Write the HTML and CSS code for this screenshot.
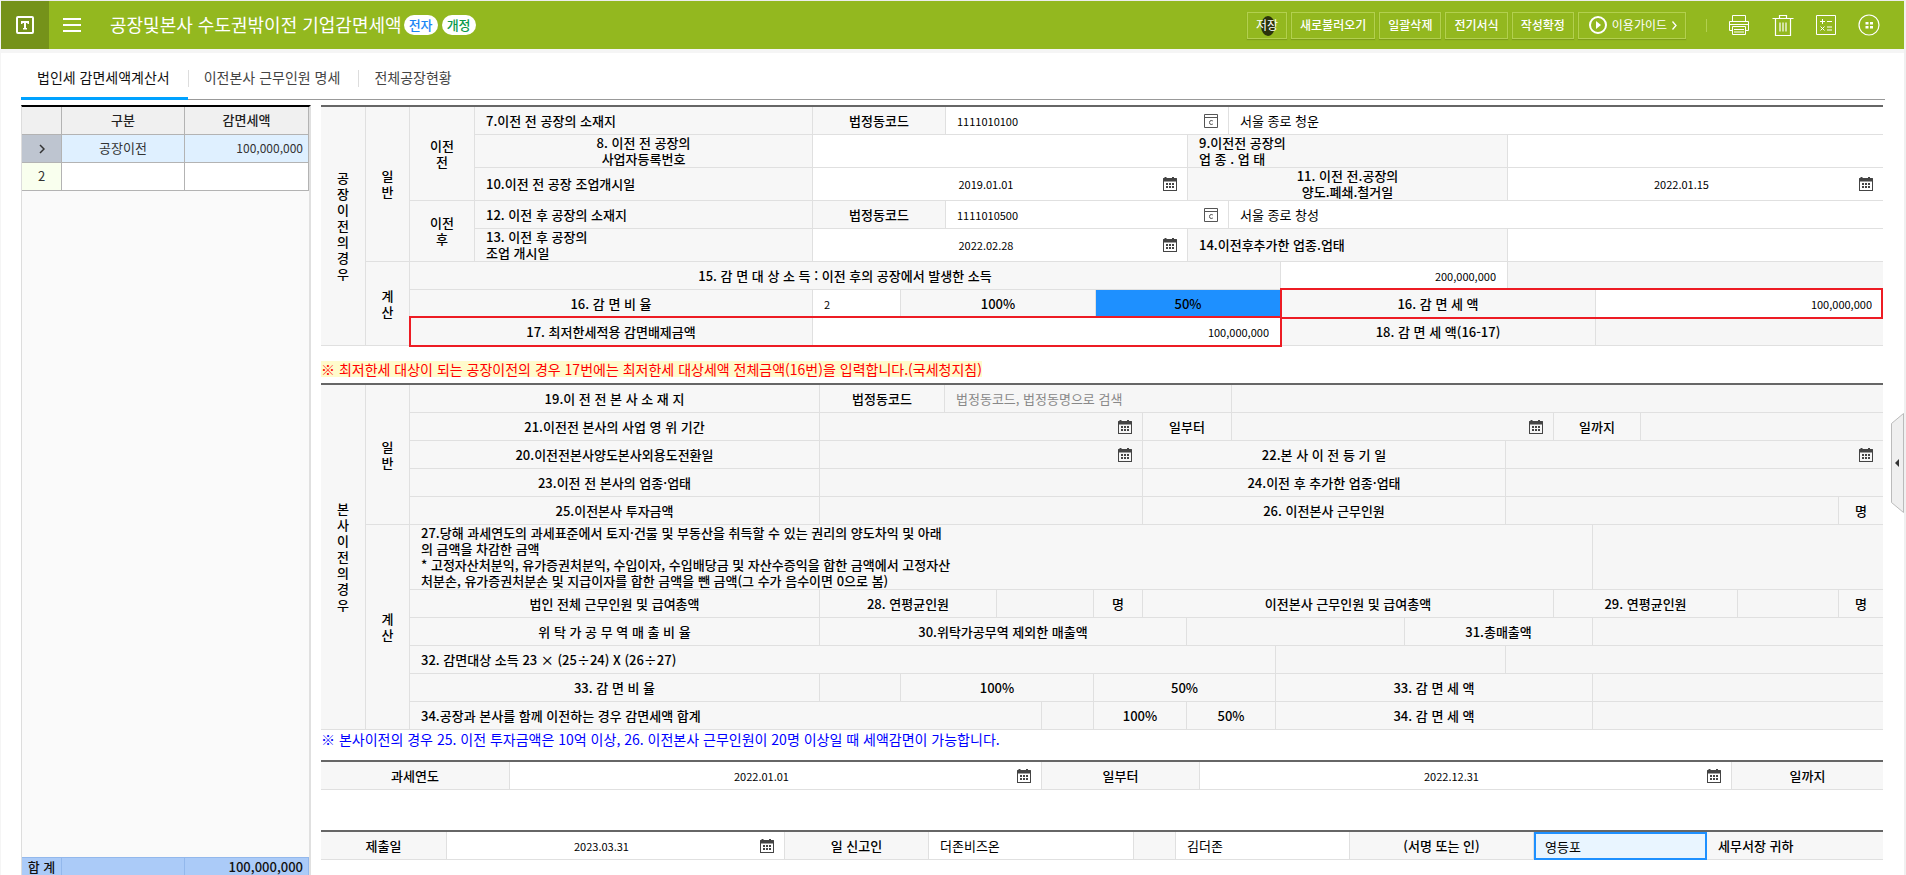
FILE: index.html
```html
<!DOCTYPE html>
<html lang="ko">
<head>
<meta charset="utf-8">
<title>공장및본사 수도권밖이전 기업감면세액</title>
<link rel="stylesheet" href="styles.css">
</head>
<body>
<svg class="defs" aria-hidden="true">
  <symbol id="cal" viewBox="0 0 14 14">
    <path d="M1.5 0h2v1h5.500v-1h2v1h2.500q.5 0 .5.500v12q0 .5-.5.500h-13q-.5 0-.5-.5v-12q0-.5.5-.5h1zM1 4.500v8.500h12v-8.500z" fill="#444" fill-rule="evenodd"/>
    <path d="M3 6h2v2h-2zM6 6h2v2h-2zM9 6h2v2h-2zM3 9h2v2h-2zM6 9h2v2h-2zM9 9h2v2h-2z" fill="#444"/>
  </symbol>
  <symbol id="code" viewBox="0 0 14 14">
    <path d="M.5.5h13v13h-13zM0 3.5h14" fill="none" stroke="#555"/>
    <path d="M9 7.2Q8.500 6.500 7.200 6.500Q5.500 6.500 5.500 8.500Q5.500 10.500 7.200 10.500Q8.500 10.500 9 9.700" fill="none" stroke="#555"/>
  </symbol>
</svg>
<header class="topbar">
  <button class="logo" aria-label="홈"><svg width="18" height="18" viewBox="0 0 18 18"><rect x="1" y="1" width="16" height="16" rx="1" fill="none" stroke="#fff" stroke-width="2"/><path d="M5 5h8v3h-1.500v-1h-1.500v5h1v1.500h-4v-1.500h1v-5h-1.500v1h-1.500z" fill="#fff"/></svg></button>
  <button class="menu" aria-label="메뉴"><svg width="18" height="14" viewBox="0 0 18 14"><path d="M0 1h18M0 7h18M0 13h18" stroke="#fff" stroke-width="2"/></svg></button>
  <h1>공장및본사 수도권밖이전 기업감면세액</h1>
  <span class="pill pill-blue">전자</span>
  <span class="pill pill-green">개정</span>
  <nav class="actions">
    <button class="act save"><span>저장</span></button>
    <button class="act">새로불러오기</button>
    <button class="act">일괄삭제</button>
    <button class="act">전기서식</button>
    <button class="act">작성확정</button>
    <button class="act guide"><svg width="18" height="18" viewBox="0 0 18 18"><circle cx="9" cy="9" r="8" fill="none" stroke="#fff" stroke-width="2"/><path d="M7 5l5 4-5 4z" fill="#fff"/></svg>이용가이드<svg width="5" height="9" viewBox="0 0 5 9"><path d="M.5.500l3.500 4-3.500 4" fill="none" stroke="#fff" stroke-width="1.300"/></svg></button>
  </nav>
  <div class="tools">
    <button aria-label="인쇄"><svg width="22" height="21" viewBox="0 0 22 21"><path d="M4.500 6.500v-6h13v6M4.500 15.500h-3v-9h19v9h-3M4.500 11.500h13v8h-13zM6 14.500h10M6 17h10M2 9.500h18" fill="none" stroke="#fff"/></svg></button>
    <button aria-label="삭제"><svg width="22" height="21" viewBox="0 0 22 21"><path d="M.5 3.500h21M7.500 3.500v-3h7v3M3.500 3.500v17h15v-17M8 7.500v9M11 7.500v9M14 7.500v9" fill="none" stroke="#fff" stroke-width="1.200"/></svg></button>
    <button aria-label="계산기"><svg width="20" height="20" viewBox="0 0 20 20"><path d="M.5.500h19v19h-19zM4 6.500h5M6.500 4v5M11 6.500h5M4.500 11.500l4 4M8.500 11.500l-4 4M11 12h5M11 15h5" fill="none" stroke="#fff"/></svg></button>
    <button aria-label="더보기"><svg width="22" height="22" viewBox="0 0 22 22"><circle cx="11" cy="11" r="10" fill="none" stroke="#fff" stroke-width="1.200"/><path d="M7.500 8h3v2.500h-3zM12 8h3v2.500h-3zM7.500 12h3v2.500h-3zM12 12h3v2.500h-3z" fill="#fff"/></svg></button>
  </div>
</header>
<nav class="tabs">
  <a href="#calc" class="tab on">법인세 감면세액계산서</a>
  <a href="#staff" class="tab">이전본사 근무인원 명세</a>
  <a href="#plants" class="tab">전체공장현황</a>
</nav>
<main>
  <aside class="list">
    <table class="grid">
      <colgroup><col class="n"><col class="k"><col></colgroup>
      <thead><tr><th></th><th>구분</th><th>감면세액</th></tr></thead>
      <tbody>
        <tr class="sel"><td class="cur"><svg width="6" height="10" viewBox="0 0 6 10"><path d="M1 1l4 4-4 4" fill="none" stroke="#333" stroke-width="1.500"/></svg></td><td>공장이전</td><td class="amt">100,000,000</td></tr>
        <tr><td class="idx">2</td><td></td><td></td></tr>
      </tbody>
    </table>
    <table class="grid total">
      <colgroup><col class="n"><col class="k"><col></colgroup>
      <tbody><tr><th>합 계</th><td></td><td class="amt">100,000,000</td></tr></tbody>
    </table>
  </aside>
  <section class="form" id="calc">
    <table class="sheet plant">
      <colgroup><col class="w45"><col class="w44"><col class="w65"><col class="w338"><col class="w88"><col class="w45"><col class="w150"><col class="w92"><col class="w41"><col class="w52"><col class="w227"><col class="w88"><col class="w287"></colgroup>
      <tbody>
      <tr><th rowspan="8">공<br>장<br>이<br>전<br>의<br>경<br>우</th><th rowspan="5">일<br>반</th><th rowspan="3">이전<br>전</th><th class="l">7.이전 전 공장의 소재지</th><th colspan="2">법정동코드</th><td colspan="3"><div class="f"><input class="num" aria-label="이전 전 법정동코드" value="1111010100"><button class="ic" aria-label="코드 검색"><svg><use href="#code"/></svg></button></div></td><td colspan="4" class="e"><input aria-label="이전 전 공장의 소재지" value="서울 종로 청운"></td></tr>
      <tr><th>8. 이전 전 공장의<br>사업자등록번호</th><td colspan="4"><input aria-label="사업자등록번호"></td><th colspan="3" class="l">9.이전전 공장의<br>업 종 . 업 태</th><td colspan="2" class="e"><input aria-label="이전전 업종 업태"></td></tr>
      <tr><th class="l">10.이전 전 공장 조업개시일</th><td colspan="4"><div class="f"><input class="num c" aria-label="조업개시일" value="2019.01.01"><button class="ic" aria-label="달력"><svg><use href="#cal"/></svg></button></div></td><th colspan="3">11. 이전 전.공장의<br>양도.폐쇄.철거일</th><td colspan="2" class="e"><div class="f"><input class="num c" aria-label="양도 폐쇄 철거일" value="2022.01.15"><button class="ic" aria-label="달력"><svg><use href="#cal"/></svg></button></div></td></tr>
      <tr><th rowspan="2">이전<br>후</th><th class="l">12. 이전 후 공장의 소재지</th><th colspan="2">법정동코드</th><td colspan="3"><div class="f"><input class="num" aria-label="이전 후 법정동코드" value="1111010500"><button class="ic" aria-label="코드 검색"><svg><use href="#code"/></svg></button></div></td><td colspan="4" class="e"><input aria-label="이전 후 공장의 소재지" value="서울 종로 창성"></td></tr>
      <tr><th class="l">13. 이전 후 공장의<br>조업 개시일</th><td colspan="4"><div class="f"><input class="num c" aria-label="이전 후 조업개시일" value="2022.02.28"><button class="ic" aria-label="달력"><svg><use href="#cal"/></svg></button></div></td><th colspan="3" class="l">14.이전후추가한 업종.업태</th><td colspan="2" class="e"><input aria-label="추가한 업종 업태"></td></tr>
      <tr><th rowspan="3">계<br>산</th><th colspan="8">15. 감 면 대 상 소 득 : 이전 후의 공장에서 발생한 소득</th><td><input class="num r" aria-label="감면대상소득" value="200,000,000"></td><td colspan="2" class="g e"></td></tr>
      <tr><th colspan="2">16. 감 면 비 율</th><td><input class="num" aria-label="감면비율" value="2"></td><th colspan="2"><button class="pct">100%</button></th><th colspan="3" class="picked"><button class="pct">50%</button></th><th colspan="2" class="mark mark-l">16. 감 면 세 액</th><td class="e mark mark-r"><input class="num r" aria-label="감면세액" value="100,000,000"></td></tr>
      <tr><th colspan="2" class="mark mark-l">17. 최저한세적용 감면배제금액</th><td colspan="6" class="mark mark-r"><input class="num r" aria-label="감면배제금액" value="100,000,000"></td><th colspan="2">18. 감 면 세 액(16-17)</th><td class="g e"></td></tr>
      </tbody>
    </table>
    <p class="note warn"><mark>※ 최저한세 대상이 되는 공장이전의 경우 17번에는 최저한세 대상세액 전체금액(16번)을 입력합니다.(국세청지침)</mark></p>
    <table class="sheet hq">
      <colgroup><col class="w45"><col class="w44"><col class="w410"><col class="w81"><col class="w44"><col class="w52"><col class="w45"><col class="w52"><col class="w49"><col class="w44"><col class="w45"><col class="w44"><col class="w129"><col class="w101"><col class="w48"><col class="w39"><col class="w48"><col class="w97"><col class="w101"><col class="w44"></colgroup>
      <tbody>
      <tr><th rowspan="11">본<br>사<br>이<br>전<br>의<br>경<br>우</th><th rowspan="5">일<br>반</th><th>19.이 전 전 본 사 소 재 지</th><th colspan="2">법정동코드</th><td colspan="6"><input aria-label="본사 법정동코드" placeholder="법정동코드, 법정동명으로 검색"></td><td colspan="9" class="e"></td></tr>
      <tr><th>21.이전전 본사의 사업 영 위 기간</th><td colspan="6"><div class="f"><input class="num c" aria-label="영위기간 시작"><button class="ic" aria-label="달력"><svg><use href="#cal"/></svg></button></div></td><th colspan="2">일부터</th><td colspan="4"><div class="f"><input class="num c" aria-label="영위기간 끝"><button class="ic" aria-label="달력"><svg><use href="#cal"/></svg></button></div></td><th colspan="2">일까지</th><td colspan="3" class="e"></td></tr>
      <tr><th>20.이전전본사양도본사외용도전환일</th><td colspan="6"><div class="f"><input class="num c" aria-label="용도전환일"><button class="ic" aria-label="달력"><svg><use href="#cal"/></svg></button></div></td><th colspan="5">22.본 사 이 전 등 기 일</th><td colspan="6" class="e"><div class="f"><input class="num c" aria-label="이전등기일"><button class="ic" aria-label="달력"><svg><use href="#cal"/></svg></button></div></td></tr>
      <tr><th>23.이전 전 본사의 업종·업태</th><td colspan="6"><input aria-label="이전 전 업종 업태"></td><th colspan="5">24.이전 후 추가한 업종·업태</th><td colspan="6" class="e"><input aria-label="이전 후 업종 업태"></td></tr>
      <tr><th>25.이전본사 투자금액</th><td colspan="6"><input class="num r" aria-label="투자금액"></td><th colspan="5">26. 이전본사 근무인원</th><td colspan="5"><input class="num r" aria-label="근무인원"></td><th class="e">명</th></tr>
      <tr><th rowspan="6">계<br>산</th><th colspan="14" class="l">27.당해 과세연도의 과세표준에서 토지·건물 및 부동산을 취득할 수 있는 권리의 양도차익 및 아래<br>의 금액을 차감한 금액<br>* 고정자산처분익, 유가증권처분익, 수입이자, 수입배당금 및 자산수증익을 합한 금액에서 고정자산<br>처분손, 유가증권처분손 및 지급이자를 합한 금액을 뺀 금액(그 수가 음수이면 0으로 봄)</th><td colspan="4" class="e"></td></tr>
      <tr><th>법인 전체 근무인원 및 급여총액</th><th colspan="3">28. 연평균인원</th><td colspan="2"><input class="num r" aria-label="28 연평균인원"></td><th>명</th><th colspan="6">이전본사 근무인원 및 급여총액</th><th colspan="3">29. 연평균인원</th><td><input class="num r" aria-label="29 연평균인원"></td><th class="e">명</th></tr>
      <tr><th>위 탁 가 공 무 역 매 출 비 율</th><th colspan="7">30.위탁가공무역 제외한 매출액</th><td colspan="3"><input class="num r" aria-label="매출액"></td><th colspan="3">31.총매출액</th><td colspan="4" class="e"><input class="num r" aria-label="총매출액"></td></tr>
      <tr><th colspan="10" class="l">32. 감면대상 소득 23 × (25÷24) X (26÷27)</th><td colspan="2"></td><td colspan="6" class="e"></td></tr>
      <tr><th>33. 감 면 비 율</th><td></td><th colspan="4"><button class="pct">100%</button></th><th colspan="4"><button class="pct">50%</button></th><th colspan="4">33. 감 면 세 액</th><td colspan="4" class="e"></td></tr>
      <tr><th colspan="5" class="l">34.공장과 본사를 함께 이전하는 경우 감면세액 합계</th><td></td><th colspan="2"><button class="pct">100%</button></th><th colspan="2"><button class="pct">50%</button></th><th colspan="4">34. 감 면 세 액</th><td colspan="4" class="e"></td></tr>
      </tbody>
    </table>
    <p class="note info">※ 본사이전의 경우 25. 이전 투자금액은 10억 이상, 26. 이전본사 근무인원이 20명 이상일 때 세액감면이 가능합니다.</p>
    <table class="sheet year">
      <colgroup><col class="w189"><col class="w532"><col class="w158"><col class="w532"><col class="w151"></colgroup>
      <tbody><tr><th>과세연도</th><td><div class="f"><input class="num c" aria-label="과세연도 시작" value="2022.01.01"><button class="ic" aria-label="달력"><svg><use href="#cal"/></svg></button></div></td><th>일부터</th><td><div class="f"><input class="num c" aria-label="과세연도 끝" value="2022.12.31"><button class="ic" aria-label="달력"><svg><use href="#cal"/></svg></button></div></td><th class="e">일까지</th></tr></tbody>
    </table>
    <table class="sheet sign">
      <colgroup><col class="w126"><col class="w338"><col class="w144"><col class="w205"><col class="w42"><col class="w174"><col class="w184"><col class="w173"><col class="w176"></colgroup>
      <tbody><tr><th>제출일</th><td><div class="f"><input class="num c" aria-label="제출일" value="2023.03.31"><button class="ic" aria-label="달력"><svg><use href="#cal"/></svg></button></div></td><th>일 신고인</th><td><input aria-label="신고인 상호" value="더존비즈온"></td><th></th><td><input aria-label="신고인 성명" value="김더존"></td><th>(서명 또는 인)</th><td class="focus"><input aria-label="세무서" value="영등포"></td><th class="l e">세무서장 귀하</th></tr></tbody>
    </table>
  </section>
</main>
<button class="drawer" aria-label="패널 열기"><svg width="13" height="100" viewBox="0 0 13 100"><path d="M12.500.500L.5 10.500v79L12.500 99.500z" fill="#efefef" stroke="#bbb"/><path d="M8 46v8l-4-4z" fill="#333"/></svg></button>
</body>
</html>
```
FILE: styles.css
```css
* { box-sizing: border-box; }
body {
  margin: 0;
  height: 100vh;
  display: flex;
  flex-direction: column;
  overflow: hidden;
  position: relative;
  border-top: 1px solid #ececec;
  border-left: 1px solid #f5f5f5;
  border-right: 2px solid #f0f0f0;
  background: #fff;
  color: #000;
  font: 13px/16px "Noto Sans CJK KR", sans-serif;
}
.defs { position: absolute; width: 0; height: 0; }
button, input { font: inherit; color: inherit; border: 0; background: none; padding: 0; margin: 0; }
input { outline: 0; min-width: 0; }
button { cursor: pointer; }

.topbar {
  display: flex;
  align-items: center;
  flex: none;
  height: 52px;
  background: #93b81f;
  border-bottom: 4px solid #f5f5f5;
  color: #fff;
}
.logo { width: 48px; height: 48px; background: #75921a; display: flex; align-items: center; justify-content: center; }
.menu { width: 46px; height: 48px; display: flex; align-items: center; justify-content: center; }
.topbar h1 { margin: 0 2px 0 15px; padding-bottom: 2px; font-size: 18px; line-height: 24px; font-weight: 400; }
.pill { width: 34px; height: 20px; margin-right: 4px; border-radius: 10px; background: #fff; text-align: center; line-height: 20px; font-weight: 500; }
.pill-blue { color: #1b86f5; }
.pill-green { color: #0a9a4c; }
.actions { display: flex; gap: 4px; margin-left: auto; }
.act { height: 27px; padding: 0 8px; border: 1px solid #b3d04f; box-shadow: 0 1px 1px #7f9f1a; font-size: 12px; line-height: 24px; color: #fff; font-weight: 500; position: relative; }
.save::before { content: ""; position: absolute; left: 13px; top: 3px; width: 14px; height: 20px; border-radius: 50%; background: #2b330c; }
.save span { position: relative; font-weight: 400; }
.guide { display: flex; align-items: center; padding: 0 8px 0 10px; gap: 5px; font-weight: 400; }
.tools { display: flex; align-items: center; gap: 22px; margin-left: 20px; padding: 0 24px 0 22px; position: relative; }
.tools::before { content: ""; width: 1px; height: 13px; background: #b3d04f; position: absolute; left: 0; }
.tools button { height: 22px; display: flex; align-items: center; }

.tabs { display: flex; flex: none; height: 47px; margin: 0 19px 5px 20px; position: relative; box-shadow: inset 0 -1px #999; }
.tab { position: relative; padding: 0 18px 0 16px; font-size: 14px; line-height: 48px; color: #444; text-decoration: none; }
.tab + .tab::before { content: ""; position: absolute; left: 0; top: 17px; width: 1px; height: 17px; background: #ddd; }
.tab.on { color: #111; border-bottom: 3px solid #00a2ff; }

main { flex: 1; min-height: 0; display: flex; gap: 10px; padding: 0 21px 0 20px; }
.list { flex: 0 0 290px; display: flex; flex-direction: column; justify-content: space-between; background: #fafafa; border-top: 2px solid #000; border-left: 1px solid #ddd; border-right: 2px solid #e0e0e0; }
.grid { width: 100%; table-layout: fixed; border-collapse: separate; border-spacing: 0; }
.grid .n { width: 40px; }
.grid .k { width: 123px; }
.grid th, .grid td { height: 28px; padding: 0 5px 2px; border: solid #b3b3b3; border-width: 0 1px 1px 0; text-align: center; font-weight: 400; background: #fff; color: #333; }
.grid thead th { background: #f0f0f0; font-weight: 500; color: #222; }
.grid .amt { text-align: right; font-size: 12px; }
.grid .sel td { background: #dff0ff; }
.grid .sel .cur { background: #bec5d0; padding-bottom: 0; }
.grid .idx { background: #f9ffee; }
.grid.total th, .grid.total td { height: 18px; padding-bottom: 0; border-color: #93b8ec; border-width: 1px 1px 0 0; background: #abcbf8; color: #111; font-weight: 500; }
.grid.total .amt { font-size: 13px; }

.form { flex: 1; min-width: 0; }
.sheet { width: 100%; table-layout: fixed; border-collapse: separate; border-spacing: 0; border-top: 2px solid #666; }
.sheet th, .sheet td { height: 28px; padding: 0; border: solid #e0e0e0; border-width: 0 1px 1px 0; background: #fff; }
.sheet tr:nth-child(n) .e { border-right: 0; }
.sheet th { background: #f7f7f7; font-weight: 500; text-align: center; }
.sheet .l { text-align: left; padding-left: 11px; }
.sheet .g, .hq td { background: #f6f6f6; }
.sheet input { display: block; width: 100%; height: 24px; padding: 0 11px; line-height: 16px; }
.sheet input::placeholder { color: #888; opacity: 1; }
.sheet .num { font-size: 11px; }
.sheet .c { text-align: center; }
.sheet .r { text-align: right; }
.f { display: flex; align-items: center; }
.f input { flex: 1; }
.ic { flex: none; width: 28px; height: 24px; display: flex; align-items: center; justify-content: flex-start; padding-left: 4px; }
.ic svg { width: 14px; height: 14px; }
.pct { display: block; width: 100%; height: 26px; font-weight: 500; }
.sheet .picked { background: #1e90ff; }
.mark { position: relative; }
.mark::after { content: ""; position: absolute; top: -2px; bottom: -2px; left: 0; right: 0; border: solid #ed1c24; border-width: 2px 0; pointer-events: none; z-index: 1; }
.mark-l::after { left: -1px; right: -1px; border-left-width: 2px; }
.mark-r::after { right: -2px; border-right-width: 2px; }
.mark-r.e::after { right: 0; }
.sheet .focus { padding: 0; border: 2px solid #1e90ff; background: #e9f5ff; }
.sheet .focus input { padding: 0 9px; }

.note { margin: 0; font-size: 14px; line-height: 16px; }
.warn { padding: 15px 0 6px; color: #f00; }
.warn mark { display: inline-block; background: #fffbcc; color: inherit; }
.info { padding: 1px 0 13px; color: #00f; }
.sign { margin-top: 40px; }

.w41 { width: 41px; } .w42 { width: 42px; } .w44 { width: 44px; } .w45 { width: 45px; }
.w39 { width: 39px; } .w48 { width: 48px; } .w49 { width: 49px; } .w52 { width: 52px; }
.w65 { width: 65px; } .w81 { width: 81px; } .w88 { width: 88px; } .w92 { width: 92px; }
.w97 { width: 97px; } .w101 { width: 101px; } .w126 { width: 126px; } .w129 { width: 129px; }
.w144 { width: 144px; } .w150 { width: 150px; } .w151 { width: 151px; } .w158 { width: 158px; }
.w173 { width: 173px; } .w174 { width: 174px; } .w176 { width: 176px; } .w184 { width: 184px; }
.w189 { width: 189px; } .w205 { width: 205px; } .w227 { width: 227px; } .w287 { width: 287px; }
.w338 { width: 338px; } .w410 { width: 410px; } .w532 { width: 532px; }

.drawer { position: absolute; right: 0; top: 412px; width: 13px; height: 100px; }
.drawer svg { display: block; }
```
